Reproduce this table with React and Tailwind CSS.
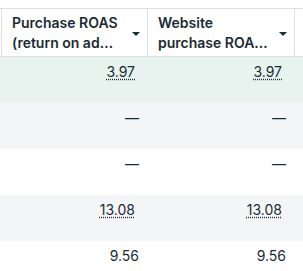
import React from 'react';

const columns = [
    { id: 'purchase_roas', label: 'Purchase ROAS (return on ad spend)' },
    { id: 'website_roas', label: 'Website purchase ROAS (return on ad spend)' },
];

const rows = [
    { bg: 'bg-[#e6f3ee]', values: ['3.97', '3.97'], dotted: true },
    { bg: 'bg-[#f4f5f7]', values: ['—', '—'] },
    { bg: 'bg-white', values: ['—', '—'] },
    { bg: 'bg-[#f4f5f7]', values: ['13.08', '13.08'], dotted: true },
    { bg: 'bg-white', values: ['9.56', '9.56'] },
];

const Caret = () => (
    <svg width="8" height="4" viewBox="0 0 8 4" className="shrink-0 mt-[3px]">
        <path d="M0 0h8L4 4z" fill="#1c2b33" />
    </svg>
);

export default function App() {
    return (
        <div
            className="w-[303px] h-[271px] overflow-hidden bg-white pt-2 text-[#1c2b33]"
            style={{ fontFamily: 'Inter, "Noto Sans", sans-serif' }}
        >
            {/* Header */}
            <div className="flex w-[500px] pl-px border-y border-[#dddfe2] bg-white">
                {columns.map((col, i) => (
                    <div
                        key={col.id}
                        className={`w-[147px] h-[47px] shrink-0 flex items-center gap-[6px] pl-[10px] pr-[7px] border-r border-[#dddfe2] ${i === 0 ? 'border-l' : ''}`}
                    >
                        <span className="flex-1 text-[14px] leading-[20px] font-semibold line-clamp-2">
                            {col.label}
                        </span>
                        <Caret />
                    </div>
                ))}
                <div className="flex-1" />
            </div>

            {/* Body */}
            {rows.map((row, r) => (
                <div key={r} className={`flex w-[500px] h-[46px] pl-px ${row.bg}`}>
                    {row.values.map((v, c) => (
                        <div
                            key={c}
                            className="w-[147px] shrink-0 pt-[5px] pr-[9px] text-right text-[14px] leading-[20px]"
                        >
                            {row.dotted ? (
                                <span className="mr-1 underline decoration-dotted underline-offset-2">{v}</span>
                            ) : (
                                <span>{v}</span>
                            )}
                        </div>
                    ))}
                </div>
            ))}
        </div>
    );
}
